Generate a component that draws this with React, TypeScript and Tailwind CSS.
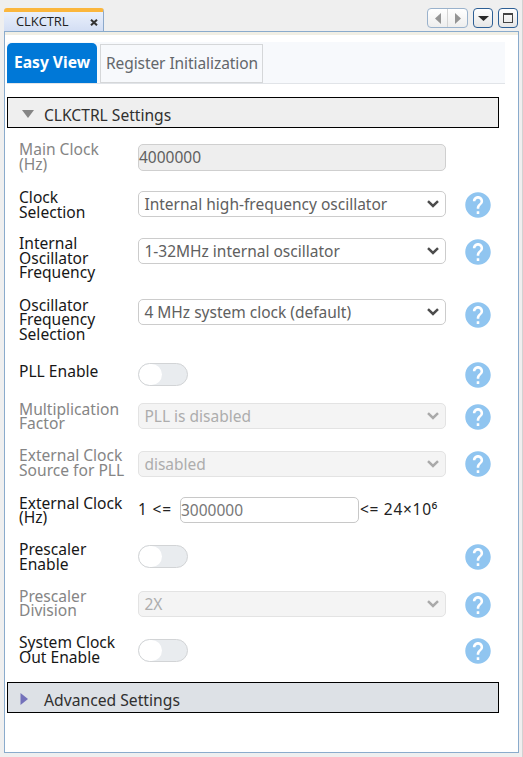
import React from "react";

type Row = {
  label: string;
  height: string;
  labelTop: string;
  controlTop: string;
  kind: "input" | "select" | "toggle" | "range";
  value?: string;
  disabled?: boolean;
  help?: string;
};

const rows: Row[] = [
  { label: "Main Clock\n(Hz)", height: "h-[47px]", labelTop: "pt-[1px]", controlTop: "pt-[3px]", kind: "input", value: "4000000", disabled: true },
  { label: "Clock\nSelection", height: "h-[46px]", labelTop: "pt-[2px]", controlTop: "pt-[3px]", kind: "select", value: "Internal high-frequency oscillator", help: "pt-[3.5px]" },
  { label: "Internal\nOscillator\nFrequency", height: "h-[62px]", labelTop: "pt-[2px]", controlTop: "pt-[4px]", kind: "select", value: "1-32MHz internal oscillator", help: "pt-[5px]" },
  { label: "Oscillator\nFrequency\nSelection", height: "h-[66px]", labelTop: "pt-[1.5px]", controlTop: "pt-[3px]", kind: "select", value: "4 MHz system clock (default)", help: "pt-[5.5px]" },
  { label: "PLL Enable", height: "h-[38px]", labelTop: "pt-[2px]", controlTop: "pt-[1px]", kind: "toggle", help: "pt-0" },
  { label: "Multiplication\nFactor", height: "h-[47px]", labelTop: "pt-[1.5px]", controlTop: "pt-[3px]", kind: "select", value: "PLL is disabled", disabled: true, help: "pt-[4px]" },
  { label: "External Clock\nSource for PLL", height: "h-[47px]", labelTop: "pt-[1px]", controlTop: "pt-[4px]", kind: "select", value: "disabled", disabled: true, help: "pt-[3.5px]" },
  { label: "External Clock\n(Hz)", height: "h-[47px]", labelTop: "pt-[1.5px]", controlTop: "pt-[3px]", kind: "range", value: "3000000" },
  { label: "Prescaler\nEnable", height: "h-[46px]", labelTop: "pt-[1px]", controlTop: "pt-[4px]", kind: "toggle", help: "pt-[3px]" },
  { label: "Prescaler\nDivision", height: "h-[47px]", labelTop: "pt-[1.5px]", controlTop: "pt-[4px]", kind: "select", value: "2X", disabled: true, help: "pt-[4.5px]" },
  { label: "System Clock\nOut Enable", height: "h-[48px]", labelTop: "pt-[1px]", controlTop: "pt-[5px]", kind: "toggle", help: "pt-[3.5px]" },
];

function HelpIcon() {
  return (
    <svg className="block size-[26px]" viewBox="1.8 1.8 20.4 20.4">
      <path
        fill="#90c5f0"
        d="M12 2C6.48 2 2 6.48 2 12s4.48 10 10 10 10-4.48 10-10S17.52 2 12 2zm1 17h-2v-2h2v2zm2.07-7.75l-.9.92C13.45 12.9 13 13.5 13 15h-2v-.5c0-1.1.45-2.1 1.17-2.83l1.24-1.26c.37-.36.59-.86.59-1.41 0-1.1-.9-2-2-2s-2 .9-2 2H8c0-2.21 1.79-4 4-4s4 1.79 4 4c0 .88-.36 1.68-.93 2.25z"
      />
    </svg>
  );
}

function Select({ value, disabled }: { value?: string; disabled?: boolean }) {
  return (
    <div className={`flex h-[26px] w-[308px] items-center justify-between rounded-[5px] border px-[6px] text-[15.5px] ${disabled ? "border-[#e3e3e3] bg-[#f4f4f4] text-[#adadad]" : "border-[#cccccc] bg-white text-[#606060]"}`}>
      <span className="-ml-[0.6px] whitespace-nowrap pt-[2px]">{value}</span>
      <svg className="mb-[1px] h-[8px] w-[12px]" viewBox="0 0 12 8" fill="none">
        <path d="M1 1.2L6 6L11 1.2" stroke={disabled ? "#a9a9a9" : "#4c4c4c"} strokeWidth="2.5" />
      </svg>
    </div>
  );
}

function Toggle() {
  return (
    <div className="h-[23px] w-[50px] overflow-hidden rounded-full border border-[#d2d4d6] bg-[#e9ecef]">
      <div className="h-full w-[23px] rounded-full bg-white" />
    </div>
  );
}

function Control({ row }: { row: Row }) {
  if (row.kind === "select") return <Select value={row.value} disabled={row.disabled} />;
  if (row.kind === "toggle") return <Toggle />;
  if (row.kind === "input")
    return <div className="flex h-[27px] w-[308px] items-center rounded-[5px] border border-[#cfcfcf] bg-[#eeeeee] pt-[1px] text-[15.5px] text-[#606060]">{row.value}</div>;
  return (
    <div className="flex h-[26px] items-center whitespace-nowrap text-[15.5px] text-[#222]">
      <span className="w-[42px] tracking-[0.8px]">1 &lt;=</span>
      <div className="flex h-[26px] w-[179px] items-center rounded-[5px] border border-[#c8c8c8] bg-white pt-px text-[#777]">{row.value}</div>
      <span className="pl-[1px] tracking-[0.7px]">&lt;= 24×10⁶</span>
    </div>
  );
}

export default function App() {
  return (
    <div className="flex h-[757px] w-[523px] flex-col overflow-hidden border-r border-[#d2d2d2] bg-[#efefef] font-['Noto_Sans','Open_Sans',sans-serif]">
      <div className="flex h-[31px] shrink-0 items-end justify-between pl-[4px] pr-[4px]">
        <div className="flex h-[23px] w-[100px] items-center justify-between overflow-hidden rounded-t-[3px] border-r border-t-[4px] border-r-[#8ca9cb] border-t-[#fbb63c] bg-linear-to-b from-[#eaf0fb] to-[#d3def4] pl-[12px] pr-[5px] font-['Open_Sans',sans-serif] text-[13px] text-[#222]">
          <span className="tracking-[-0.1px]">CLKCTRL</span>
          <svg className="mt-[2px] h-[7px] w-[8px]" viewBox="0 0 8 7"><path d="M1 .7L7 6.3M7 .7L1 6.3" stroke="#333" strokeWidth="2" /></svg>
        </div>
        <div className="mb-[3px] flex h-[20px]">
          <div className="flex w-[41px] rounded-[4px] border border-[#9ab2cc] bg-linear-to-b from-white to-[#eeeeee]">
            <div className="flex flex-1 items-center justify-center border-r border-[#d4d4d4]"><svg className="h-[11px] w-[6px]" viewBox="0 0 6 11"><path d="M6 0V11L0 5.5Z" fill="#949494" /></svg></div>
            <div className="flex flex-1 items-center justify-center"><svg className="h-[11px] w-[6px]" viewBox="0 0 6 11"><path d="M0 0V11L6 5.5Z" fill="#949494" /></svg></div>
          </div>
          <div className="ml-[5px] flex w-[20px] items-center justify-center rounded-[4px] border-[1.5px] border-[#2d5f95] bg-linear-to-b from-white to-[#e6e6e6]"><svg className="h-[5px] w-[11px]" viewBox="0 0 11 5"><path d="M0 0H11L5.5 5Z" fill="#292929" /></svg></div>
          <div className="ml-[5px] flex w-[20px] items-center justify-center rounded-[4px] border-[1.5px] border-[#2d5f95] bg-linear-to-b from-white to-[#e6e6e6]"><div className="size-[10px] border border-t-2 border-[#444]" /></div>
        </div>
      </div>

      <div className="ml-[4px] flex h-[722px] w-[515px] shrink-0 flex-col border-x-[1.5px] border-y border-[#8aabcc] bg-white">
        <div className="h-[3px] shrink-0 bg-[#f1efe5]" />
        <div className="mt-[7px] ml-[2px] flex h-[42px] w-[498px] shrink-0 items-end border-b border-[#e1e4e8] bg-[#f7f9fc]">
          <div className="flex h-[40px] w-[90px] items-center justify-center rounded-t-[5px] bg-[#0078d7] text-[15.6px] font-bold text-white">Easy View</div>
          <div className="ml-[3px] flex h-[39px] w-[163px] items-center justify-center border border-[#d5d7d9] pl-px text-[15.5px] tracking-[-0.07px] text-[#63676b]">Register Initialization</div>
        </div>
        <div className="mt-[13px] ml-[2px] flex h-[31px] w-[492px] shrink-0 items-center border border-black bg-[#efefef] pt-[3px] text-[15.6px] text-[#303030]">
          <svg className="ml-[14px] h-[8px] w-[12px]" viewBox="0 0 12 8"><path d="M0 0H12L6 8Z" fill="#858585" /></svg>
          <span className="ml-[10px] pt-[3px]">CLKCTRL Settings</span>
        </div>

        <div className="mt-[13px] flex shrink-0 flex-col">
          {rows.map((row, index) => (
            <div key={index} className={`flex shrink-0 pl-[14px] ${row.height}`}>
              <div className={`w-[119px] whitespace-pre text-[15.6px] leading-[14.5px] ${row.labelTop} ${row.disabled ? "text-[#858585]" : "text-[#171717]"}`}>
                {row.label}
              </div>
              <div className={`w-[327px] ${row.controlTop}`}><Control row={row} /></div>
              {row.help && <div className={row.help}><HelpIcon /></div>}
            </div>
          ))}
        </div>

        <div className="ml-[2px] flex h-[31px] w-[492px] shrink-0 items-center border border-black bg-[#dde1e6] pt-[3px] text-[15.7px] text-[#303030]">
          <svg className="mb-[1px] ml-[12px] h-[12px] w-[8px]" viewBox="0 0 8 12"><path d="M.5 0V12L8 6Z" fill="#7371ba" /></svg>
          <span className="ml-[16px] pt-[3px]">Advanced Settings</span>
        </div>
      </div>
    </div>
  );
}
